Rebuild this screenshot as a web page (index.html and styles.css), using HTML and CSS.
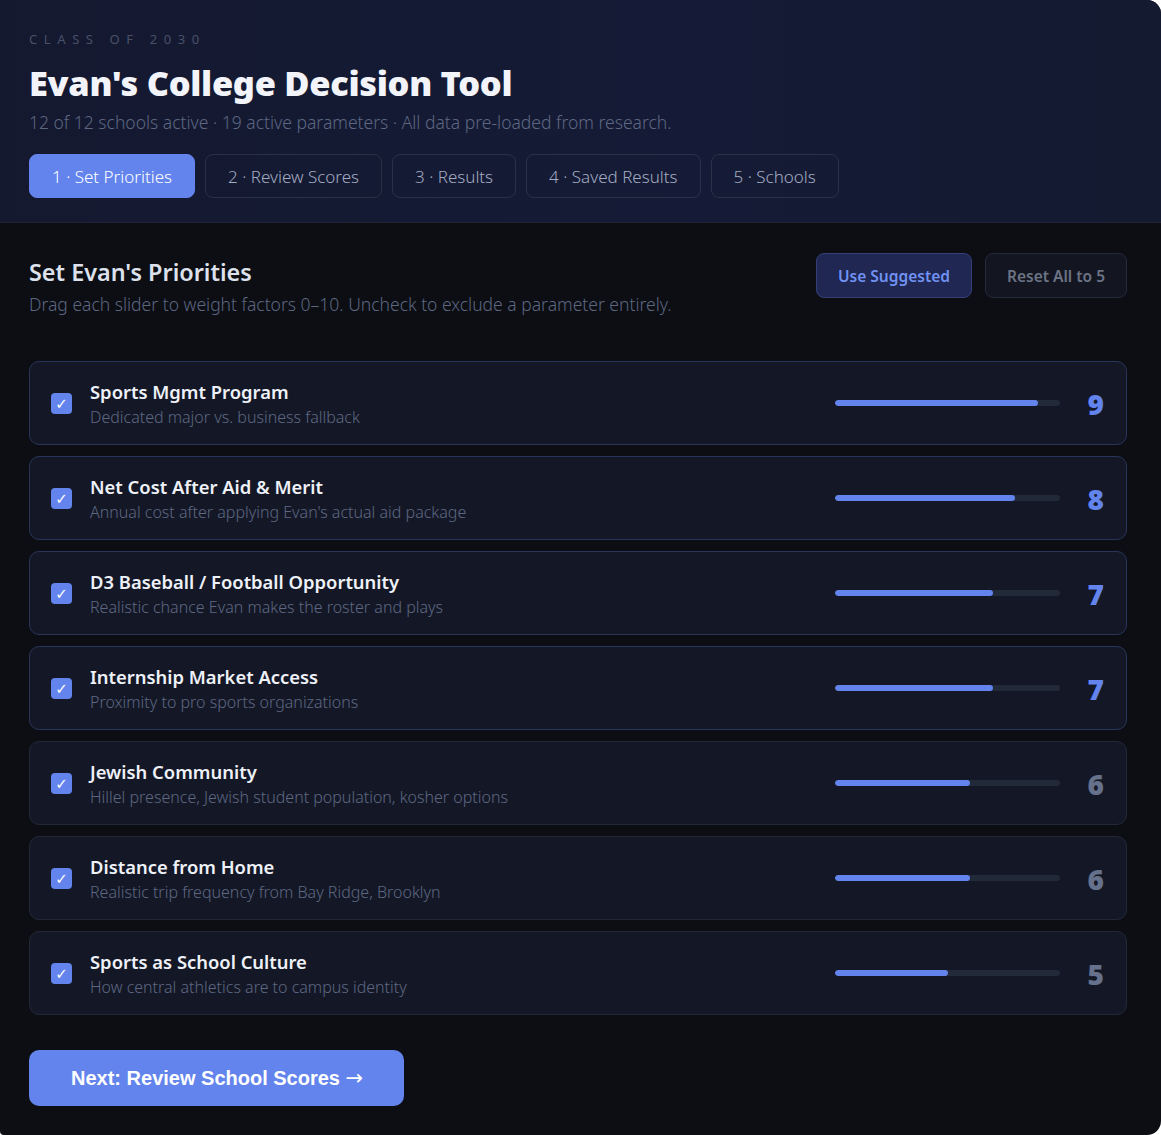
FILE: index.html
```html
<!DOCTYPE html>
<html lang="en">
<head>
    <meta charset="UTF-8">
    <meta name="viewport" content="width=device-width, initial-scale=1.0">
    <title>Evan's College Decision Tool</title>
    <link rel="stylesheet" href="styles.css">
</head>
<body>
    <div class="app">
        <div id="header">
            <div class="eyebrow">Class of 2030</div>
            <h1 id="heading">Evan's College Decision Tool</h1>
            <div class="summary">12 of 12 schools active · 19 active parameters · All data pre-loaded from research.</div>
            <div class="tabs">
                <button class="tab active">1 · Set Priorities</button>
                <button class="tab">2 · Review Scores</button>
                <button class="tab">3 · Results</button>
                <button class="tab">4 · Saved Results</button>
                <button class="tab">5 · Schools</button>
            </div>
        </div>

        <div class="main">
            <div class="section-head">
                <div>
                    <h2>Set Evan's Priorities</h2>
                    <p class="hint">Drag each slider to weight factors 0–10. Uncheck to exclude a parameter entirely.</p>
                </div>
                <div class="actions">
                    <button class="btn-suggested">Use Suggested</button>
                    <button class="btn-reset">Reset All to 5</button>
                </div>
            </div>

            <div class="params" id="params"></div>

            <button class="btn-next">Next: Review School Scores <span class="arrow">→</span></button>
        </div>
    </div>

    <script>
        const params = [
            { name: 'Sports Mgmt Program', desc: 'Dedicated major vs. business fallback', weight: 9 },
            { name: 'Net Cost After Aid & Merit', desc: "Annual cost after applying Evan's actual aid package", weight: 8 },
            { name: 'D3 Baseball / Football Opportunity', desc: 'Realistic chance Evan makes the roster and plays', weight: 7 },
            { name: 'Internship Market Access', desc: 'Proximity to pro sports organizations', weight: 7 },
            { name: 'Jewish Community', desc: 'Hillel presence, Jewish student population, kosher options', weight: 6 },
            { name: 'Distance from Home', desc: 'Realistic trip frequency from Bay Ridge, Brooklyn', weight: 6 },
            { name: 'Sports as School Culture', desc: 'How central athletics are to campus identity', weight: 5 }
        ];

        const list = document.getElementById('params');

        // Build one card per parameter
        params.forEach(function(p) {
            const high = p.weight >= 7;
            const card = document.createElement('div');
            card.className = 'param' + (high ? ' high' : '');
            card.innerHTML =
                '<span class="check">✓</span>' +
                '<div class="param-text">' +
                    '<div class="param-name"></div>' +
                    '<div class="param-desc"></div>' +
                '</div>' +
                '<div class="track"><div class="fill" style="width:' + (p.weight * 10) + '%"></div></div>' +
                '<div class="weight">' + p.weight + '</div>';
            card.querySelector('.param-name').textContent = p.name;
            card.querySelector('.param-desc').textContent = p.desc;
            list.appendChild(card);
        });
    </script>
</body>
</html>
```

FILE: styles.css
```css
* {
    margin: 0;
    padding: 0;
    box-sizing: border-box;
}

body {
    font-family: 'Noto Sans', 'Segoe UI', sans-serif;
    background-color: #ffffff;
    color: #dfe3ee;
}

.app {
    width: 1161px;
    background-color: #0c0e14;
    border-radius: 0 14px 14px 4px;
    overflow: hidden;
}

#header {
    padding: 30px 29px 24px;
    background: linear-gradient(90deg, #141930 0%, #151b36 60%, #141a30 100%);
    border-bottom: 1px solid #1f2535;
}

.eyebrow {
    font-size: 13px;
    letter-spacing: 6.6px;
    text-transform: uppercase;
    color: #485068;
    line-height: 18px;
}

#heading {
    margin-top: 13px;
    font-size: 34.4px;
    font-weight: 900;
    color: #f2f4fa;
    line-height: 44px;
    letter-spacing: -0.3px;
}

.summary {
    margin-top: 6px;
    font-size: 17.5px;
    font-weight: 300;
    color: #5d6782;
    line-height: 22px;
}

.tabs {
    display: flex;
    gap: 10px;
    margin-top: 21px;
}

.tab {
    height: 44px;
    padding: 0 22px;
    font-family: inherit;
    font-size: 17px;
    font-weight: 300;
    color: #a3abc2;
    background-color: transparent;
    border: 1px solid #2a3146;
    border-radius: 8px;
}

.tab.active {
    background-color: #6384ec;
    border-color: #6384ec;
    color: #ffffff;
}

.main {
    padding: 30px 34px 29px 29px;
}

.section-head {
    display: flex;
    justify-content: space-between;
    align-items: flex-start;
}

h2 {
    margin-top: 3px;
    font-size: 23.4px;
    font-weight: 600;
    color: #dde1ec;
    line-height: 32px;
}

.hint {
    margin-top: 4px;
    font-size: 17.5px;
    font-weight: 300;
    color: #5d6782;
    line-height: 24px;
}

.actions {
    display: flex;
    gap: 13px;
}

.actions button {
    height: 45px;
    padding: 0 21px;
    font-family: inherit;
    font-size: 15.5px;
    font-weight: 600;
    border-radius: 8px;
}

.btn-suggested {
    background-color: #1f2752;
    border: 1px solid #343f78;
    color: #7192f2;
}

.btn-reset {
    background-color: #131621;
    border: 1px solid #252a3a;
    color: #6c7384;
    font-weight: 500;
}

.params {
    display: flex;
    flex-direction: column;
    gap: 11px;
    margin-top: 45px;
}

.param {
    display: flex;
    align-items: center;
    height: 84px;
    padding: 0 22px 0 21px;
    background-color: #141826;
    border: 1px solid #232838;
    border-radius: 10px;
}

.param.high {
    border-color: #28345a;
}

.check {
    flex: none;
    width: 21px;
    height: 21px;
    margin-top: 1px;
    display: flex;
    align-items: center;
    justify-content: center;
    background-color: #6384ec;
    border-radius: 4px;
    color: #ffffff;
    font-size: 15px;
    font-family: 'DejaVu Sans', sans-serif;
}

.param-text {
    flex: 1;
    margin-left: 18px;
    padding-top: 1px;
}

.param-name {
    font-size: 18.4px;
    font-weight: 600;
    color: #eef1f8;
    line-height: 25px;
}

.param-desc {
    margin-top: 2px;
    font-size: 16px;
    font-weight: 300;
    color: #5d6782;
    line-height: 22px;
}

.track {
    flex: none;
    width: 225px;
    height: 6px;
    background-color: #222939;
    border-radius: 3px;
    overflow: hidden;
}

.fill {
    height: 100%;
    background-color: #6384ec;
    border-radius: 3px;
}

.weight {
    flex: none;
    width: 44px;
    margin-top: 2px;
    text-align: right;
    font-size: 28px;
    font-weight: 900;
    color: #66718c;
    line-height: 1;
}

.param.high .weight {
    color: #6384ec;
}

.btn-next {
    margin-top: 35px;
    height: 56px;
    padding: 0 41px 0 42px;
    background-color: #6384ec;
    border: none;
    border-radius: 10px;
    color: #ffffff;
    font-family: 'Liberation Sans', Arial, sans-serif;
    font-size: 20px;
    font-weight: 700;
}

.arrow {
    font-family: 'DejaVu Sans', sans-serif;
    font-weight: 400;
    font-size: 21px;
}
```
